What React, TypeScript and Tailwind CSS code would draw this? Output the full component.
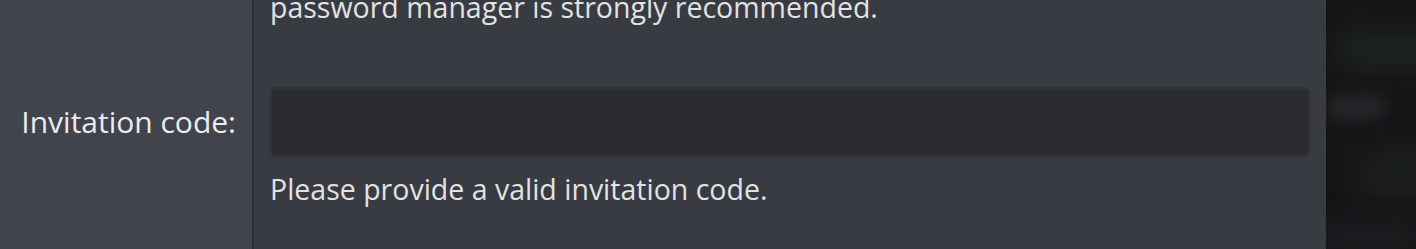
export default function App() {
    return (
        <div
            className="flex h-[249px] w-full overflow-hidden bg-[#131416] text-[28.5px] leading-[1.5] text-[#e2e2e2]"
            style={{ fontFamily: '"Open Sans", "Noto Sans", sans-serif' }}
        >
            <div className="flex flex-1 flex-col">
                {/* hint above, cut off by the viewport */}
                <div className="-mt-[14px] flex">
                    <div className="w-[254px] shrink-0 border-r-2 border-[#2c2d31] bg-[#41444c]" />
                    <div className="flex-1 bg-[#393b43] px-4">
                        <p>password manager is strongly recommended.</p>
                    </div>
                </div>

                <div className="flex">
                    <div className="w-[254px] shrink-0 border-r-2 border-[#2c2d31] bg-[#41444c]" />
                    <div className="h-[58px] flex-1 bg-[#393b43]" />
                </div>

                <div className="flex items-stretch">
                    <div className="flex w-[254px] shrink-0 items-center justify-end border-r-2 border-[#2c2d31] bg-[#41444c] pr-4 text-[30px] text-[#ececec]">
                        <label htmlFor="invite">Invitation code:</label>
                    </div>
                    <div className="flex-1 bg-[#393b43] px-4">
                        <input
                            id="invite"
                            type="text"
                            className="block h-[70px] w-full rounded-[6px] border-2 border-[#303237] bg-[#2a2c31] px-4 text-[#e2e2e2] outline-none"
                        />
                    </div>
                </div>

                <div className="flex flex-1">
                    <div className="w-[254px] shrink-0 border-r-2 border-[#2c2d31] bg-[#41444c]" />
                    <div className="flex-1 bg-[#393b43] px-4 pt-[11px]">
                        <p>Please provide a valid invitation code.</p>
                    </div>
                </div>
            </div>

            {/* blurred backdrop behind the dialog */}
            <div className="relative w-[90px] shrink-0 overflow-hidden bg-[#141517]">
                <div className="absolute left-[10px] top-[30px] h-[40px] w-[120px] rounded-full bg-[#1c231c] blur-[12px]" />
                <div className="absolute left-0 top-[95px] h-[24px] w-[60px] rounded-full bg-[#262729] blur-[8px]" />
                <div className="absolute left-[30px] top-[150px] h-[50px] w-[90px] rounded-full bg-[#1c201d] blur-[14px]" />
                <div className="absolute left-0 top-[220px] h-[30px] w-[90px] bg-[#1b1c1e] blur-[10px]" />
            </div>
        </div>
    )
}
